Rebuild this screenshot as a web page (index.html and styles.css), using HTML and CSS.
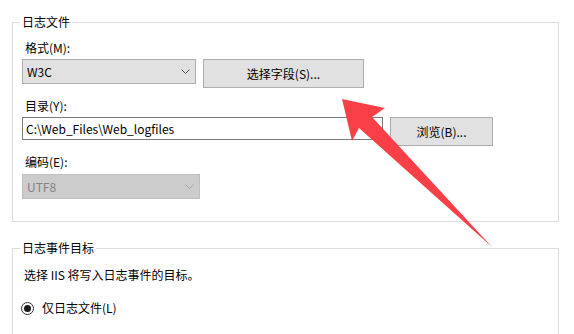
FILE: index.html
```html
<!DOCTYPE html>
<html lang="zh-CN">
<head>
  <meta charset="UTF-8" />
  <title>日志</title>
  <link rel="stylesheet" href="styles.css">
</head>
<body>

<fieldset class="group first">
  <legend>日志文件</legend>

  <div class="field-label">格式(M):</div>
  <div class="row">
    <div class="combo format">
      <span>W3C</span>
      <svg class="chev" width="9" height="5" viewBox="0 0 9 5"><path d="M0.5 0.5 L4.5 4.5 L8.5 0.5" fill="none" stroke="#555" stroke-width="1"/></svg>
    </div>
    <div class="btn fields">选择字段(S)...</div>
  </div>

  <div class="field-label dir">目录(Y):</div>
  <div class="row">
    <div class="textbox">C:\Web_Files\Web_logfiles</div>
    <div class="btn browse">浏览(B)...</div>
  </div>

  <div class="field-label enc">编码(E):</div>
  <div class="combo encoding disabled">
    <span>UTF8</span>
    <svg class="chev" width="9" height="5" viewBox="0 0 9 5"><path d="M0.5 0.5 L4.5 4.5 L8.5 0.5" fill="none" stroke="#a8a8a8" stroke-width="1"/></svg>
  </div>
</fieldset>

<fieldset class="group second">
  <legend>日志事件目标</legend>
  <div class="hint">选择 IIS 将写入日志事件的目标。</div>
  <div class="radio-row">
    <span class="radio"><span class="dot"></span></span>
    <span>仅日志文件(L)</span>
  </div>
</fieldset>

<!-- red pointer drawn over the form -->
<svg class="arrow" width="574" height="334" viewBox="0 0 574 334">
  <polygon points="342,99 385,108 372,117 492,247 359,128 352,141" fill="#f94046"/>
</svg>

</body>
</html>
```

FILE: styles.css
```css
html, body { margin: 0; padding: 0; background: #fff; }
body {
  font-family: "Noto Sans CJK SC", "Noto Sans", sans-serif;
  font-size: 12px;
  line-height: 16px;
  color: #000;
  width: 574px;
  height: 334px;
  overflow: hidden;
  position: relative;
}

.group {
  border: 1px solid #dcdcdc;
  margin: 0 15px 0 12px;
  padding: 10px 0 22px 9px;
  min-width: 0;
}
.group legend {
  padding: 0 2px;
  margin-left: -2px;
  line-height: 16px;
}
.first { margin-top: 14px; }
/* this box runs on below the visible area */
.second { margin-top: 18px; padding-top: 11px; padding-bottom: 24px; }

.field-label { padding-left: 3px; }
.field-label.dir { margin-top: 10px; }
.field-label.enc { margin-top: 8px; }

.row {
  display: flex;
  align-items: flex-start;
  gap: 7px;
  margin-top: 3px;
}

.combo {
  box-sizing: border-box;
  height: 25px;
  background: #e1e1e1;
  border: 1px solid #adadad;
  display: flex;
  align-items: center;
  justify-content: space-between;
  padding: 0 5px 0 4px;
}
.combo.format { width: 174px; }
.combo.encoding { width: 178px; margin-top: 4px; }
.combo.disabled {
  background: #cccccc;
  border-color: #bfbfbf;
  color: #838383;
}
.chev { display: block; }

.btn {
  box-sizing: border-box;
  height: 29px;
  background: #e1e1e1;
  border: 1px solid #adadad;
  display: flex;
  align-items: center;
  justify-content: center;
}
.btn.fields { width: 161px; }
.btn.browse { width: 103px; }

.textbox {
  box-sizing: border-box;
  width: 361px;
  height: 23px;
  border: 1px solid #7a7a7a;
  padding: 0 3px;
  display: flex;
  align-items: center;
}

.hint { padding-left: 2px; }

.radio-row {
  display: flex;
  align-items: center;
  gap: 8px;
  margin-top: 17px;
}
.radio {
  box-sizing: border-box;
  width: 13px;
  height: 13px;
  border: 1px solid #333;
  border-radius: 50%;
  display: flex;
  align-items: center;
  justify-content: center;
  margin-left: -1px;
}
.radio .dot {
  width: 7px;
  height: 7px;
  border-radius: 50%;
  background: #1a1a1a;
}

.arrow {
  position: absolute;
  left: 0;
  top: 0;
  pointer-events: none;
}
```
